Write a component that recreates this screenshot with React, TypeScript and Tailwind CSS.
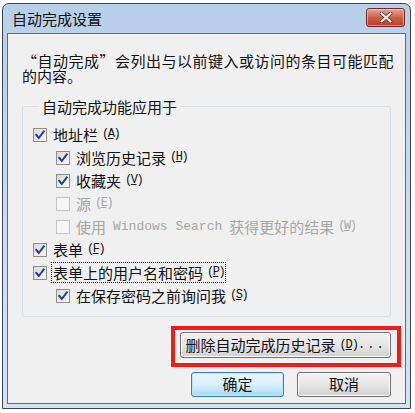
import React from "react";

const cjk = "font-['Microsoft_YaHei','Noto_Sans_CJK_SC',sans-serif]";

function Mn({ k, disabled }: { k: string; disabled?: boolean }) {
  return (
    <span
      className={`ml-[4px] text-[12px] font-['Liberation_Mono',monospace] tracking-[-1.5px] ${
        disabled ? "text-[#a7a7a7]" : "text-[#111]"
      }`}
    >
      (<span className="underline">{k}</span>)
    </span>
  );
}

function Box({ checked, disabled }: { checked?: boolean; disabled?: boolean }) {
  return (
    <span
      className={`flex h-[14px] w-[14px] shrink-0 items-center justify-center border ${
        disabled
          ? "border-[#c6c6c6] bg-[#f7f7f7]"
          : "border-[#8e8f8f] bg-gradient-to-br from-[#d8d8d8] to-[#fbfbfb]"
      }`}
    >
      {checked && (
        <svg width="12" height="12" viewBox="0 0 12 12">
          <path
            d="M2.3 6 L4.8 9 L9.8 2.4"
            fill="none"
            stroke="#23399c"
            strokeWidth="2"
            strokeLinecap="square"
          />
        </svg>
      )}
    </span>
  );
}

function Row({
  level,
  checked,
  disabled,
  children,
  k,
  focus,
}: {
  level: number;
  checked?: boolean;
  disabled?: boolean;
  children: React.ReactNode;
  k: string;
  focus?: boolean;
}) {
  return (
    <div className={`flex h-[23px] items-center ${level === 2 ? "pl-[23px]" : ""}`}>
      <Box checked={checked} disabled={disabled} />
      <span
        className={`ml-[4px] flex items-center whitespace-nowrap px-[1px] text-[15px] leading-[19px] ${
          disabled ? "text-[#a7a7a7]" : "text-[#111]"
        } ${focus ? "border border-dotted border-[#222]" : "border border-transparent"}`}
      >
        {children}
        <Mn k={k} disabled={disabled} />
      </span>
    </div>
  );
}

export default function App() {
  return (
    <div className={`h-[413px] w-[415px] bg-white pl-[2px] pt-[3px] ${cjk}`}>
      <div className="flex h-[406px] w-[409px] flex-col rounded-t-[7px] border border-[#3d4650] bg-gradient-to-b from-[#b7cfe8] via-[#c9dcf0] to-[#d3e3f4] px-[4px] pb-[4px]">
        <div className="flex h-[29px] shrink-0 items-start justify-between">
          <span className="mt-[5px] pl-[5px] text-[15px] leading-[19px] text-[#111]">自动完成设置</span>
          <div className="mr-[1px] mt-[4px] flex h-[19px] w-[39px] items-center justify-center rounded-[3px] border border-[#6d2a24] bg-gradient-to-b from-[#e6a594] via-[#cf5f4a] to-[#c0392b] shadow-[inset_0_0_0_1px_rgba(255,220,210,0.5)]">
            <svg width="14" height="11" viewBox="0 0 14 11">
              <path d="M2.5 1.5 L11.5 9.5 M11.5 1.5 L2.5 9.5" stroke="#5a2018" strokeWidth="3.6" strokeLinecap="round" />
              <path d="M2.5 1.5 L11.5 9.5 M11.5 1.5 L2.5 9.5" stroke="#fff" strokeWidth="2.2" strokeLinecap="round" />
            </svg>
          </div>
        </div>
        <div className="flex flex-1 flex-col border border-[#5f6d7b] bg-[#f0f0f0]">
          <div className="px-[14px] pt-[19px] text-[15px] leading-[15px] text-[#111]">
            <div className="whitespace-nowrap tracking-[0.5px]">“自动完成”会列出与以前键入或访问的条目可能匹配</div>
            <div>的内容。</div>
          </div>
          <fieldset className="mx-[14px] mt-[15px] rounded-[3px] border border-[#d5dfe5] pb-[9px] pl-[10px]">
            <legend className="ml-[6px] px-[3px] text-[15px] leading-[17px] text-[#111]">自动完成功能应用于</legend>
            <div className="flex flex-col pt-[8px]">
              <Row level={1} checked k="A">地址栏</Row>
              <Row level={2} checked k="H">浏览历史记录</Row>
              <Row level={2} checked k="V">收藏夹</Row>
              <Row level={2} disabled k="E">源</Row>
              <Row level={2} disabled k="W">
                使用
                <span className="mx-[7px] font-['Liberation_Mono',monospace] text-[13px]">Windows Search</span>
                获得更好的结果
              </Row>
              <Row level={1} checked k="F">表单</Row>
              <Row level={1} checked focus k="P">表单上的用户名和密码</Row>
              <Row level={2} checked k="S">在保存密码之前询问我</Row>
            </div>
          </fieldset>
          <div className="flex justify-end pr-[4px] pt-[9px]">
            <div className="border-[4px] border-[#ee1c1c] pb-[5px] pl-[5px] pr-[6px] pt-[2px]">
              <div className="flex h-[26px] w-[211px] items-center justify-center rounded-[3px] border border-[#707070] bg-gradient-to-b from-[#f2f2f2] via-[#e6e6e6] to-[#d2d2d2] text-[15px] text-[#111] shadow-[inset_0_0_0_1px_#fcfcfc]">
                删除自动完成历史记录
                <span className="ml-[4px] font-['Liberation_Mono',monospace] text-[12px] tracking-[-1px]">
                  (<span className="underline">D</span>)
                </span>
                <span className="font-['Liberation_Mono',monospace] text-[12px] tracking-[2px]">...</span>
              </div>
            </div>
          </div>
          <div className="flex justify-end gap-[13px] pr-[14px] pt-[5px]">
            <div className="flex h-[25px] w-[93px] items-center justify-center rounded-[3px] border border-[#3c7fb1] bg-gradient-to-b from-[#eaf6fd] via-[#d9f0fc] to-[#a7d9f5] text-[15px] text-[#111] shadow-[inset_0_0_0_1px_#c4e5f6]">
              确定
            </div>
            <div className="flex h-[25px] w-[94px] items-center justify-center rounded-[3px] border border-[#707070] bg-gradient-to-b from-[#f2f2f2] via-[#e6e6e6] to-[#d2d2d2] text-[15px] text-[#111] shadow-[inset_0_0_0_1px_#fcfcfc]">
              取消
            </div>
          </div>
        </div>
      </div>
    </div>
  );
}
